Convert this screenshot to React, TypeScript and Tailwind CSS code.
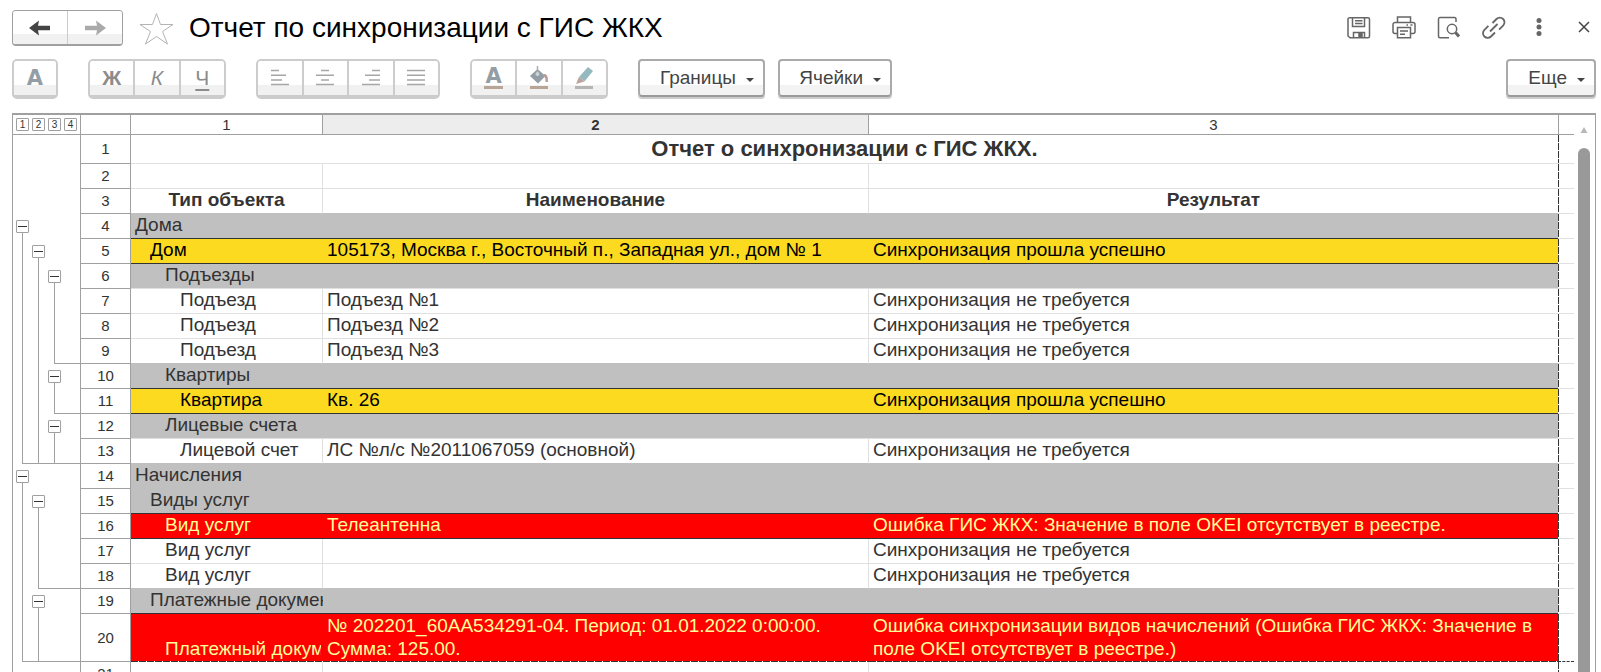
import type { ReactNode } from 'react';
import clsx from 'clsx';

type Kind = 'plain' | 'group' | 'success' | 'error';

interface Row {
    n: number;
    kind: Kind;
    level: number;
    // one char per outline lane: o = toggle, | = line, L = end, T = line over end, - = end continued
    lanes: string;
    type: string;
    name?: string;
    result?: string;
}

const NOT_REQUIRED = 'Синхронизация не требуется';
const SUCCESS = 'Синхронизация прошла успешно';

const rows: Row[] = [
    { n: 4, kind: 'group', level: 0, lanes: 'o   ', type: 'Дома' },
    { n: 5, kind: 'success', level: 1, lanes: '|o  ', type: 'Дом', name: '105173, Москва г., Восточный п., Западная ул., дом № 1', result: SUCCESS },
    { n: 6, kind: 'group', level: 2, lanes: '||o ', type: 'Подъезды' },
    { n: 7, kind: 'plain', level: 3, lanes: '||| ', type: 'Подъезд', name: 'Подъезд №1', result: NOT_REQUIRED },
    { n: 8, kind: 'plain', level: 3, lanes: '||| ', type: 'Подъезд', name: 'Подъезд №2', result: NOT_REQUIRED },
    { n: 9, kind: 'plain', level: 3, lanes: '||L-', type: 'Подъезд', name: 'Подъезд №3', result: NOT_REQUIRED },
    { n: 10, kind: 'group', level: 2, lanes: '||o ', type: 'Квартиры' },
    { n: 11, kind: 'success', level: 3, lanes: '||L-', type: 'Квартира', name: 'Кв. 26', result: SUCCESS },
    { n: 12, kind: 'group', level: 2, lanes: '||o ', type: 'Лицевые счета' },
    { n: 13, kind: 'plain', level: 3, lanes: 'LTT-', type: 'Лицевой счет', name: 'ЛС №л/с №2011067059 (основной)', result: NOT_REQUIRED },
    { n: 14, kind: 'group', level: 0, lanes: 'o   ', type: 'Начисления' },
    { n: 15, kind: 'group', level: 1, lanes: '|o  ', type: 'Виды услуг' },
    { n: 16, kind: 'error', level: 2, lanes: '||  ', type: 'Вид услуг', name: 'Телеантенна', result: 'Ошибка ГИС ЖКХ: Значение в поле OKEI отсутствует в реестре.' },
    { n: 17, kind: 'plain', level: 2, lanes: '||  ', type: 'Вид услуг', result: NOT_REQUIRED },
    { n: 18, kind: 'plain', level: 2, lanes: '|L--', type: 'Вид услуг', result: NOT_REQUIRED },
    { n: 19, kind: 'group', level: 1, lanes: '|o  ', type: 'Платежные документы' },
    {
        n: 20,
        kind: 'error',
        level: 2,
        lanes: 'LT--',
        type: 'Платежный документ',
        name: '№ 202201_60АА534291-04. Период: 01.01.2022 0:00:00. Сумма: 125.00.',
        result: 'Ошибка синхронизации видов начислений (Ошибка ГИС ЖКХ: Значение в поле OKEI отсутствует в реестре.)',
    },
];

const indents = ['pl-1', 'pl-[19px]', 'pl-[34px]', 'pl-[49px]'];

const kindStyles: Record<Kind, string> = {
    plain: 'text-[#333]',
    group: 'bg-[#c0c0c0] text-[#333]',
    success: 'bg-[#fbda20] text-black',
    error: 'bg-[#ff0000] text-[#ffff99]',
};

// The bottom line of a row takes its colour from the rows it separates
function bottomLine(kind: Kind, next?: Kind) {
    if (kind === 'success' || kind === 'error' || next === 'success' || next === 'error') return 'border-b border-b-[#333]';
    if (kind === 'group' && next === 'plain') return 'border-b border-b-[#e0e0e0]';
    if (kind === 'group' || next === 'group') return 'border-b border-b-[#c0c0c0]';
    return 'border-b border-b-[#e0e0e0]';
}

function Lane({ code }: { code: string }) {
    const vertical = code === '|' || code === 'L' || code === 'T';
    if (code === 'o') {
        return (
            <span className="flex w-4 flex-col pt-1.5 last:flex-1">
                <button aria-label="Свернуть группу" className="ml-0.5 flex size-[13px] shrink-0 items-center justify-center rounded-[1px] border border-[#a0a0a0] bg-white">
                    <span className="h-px w-[9px] bg-[#333]" />
                </button>
                <span className="ml-2 w-px flex-1 bg-[#a0a0a0]" />
            </span>
        );
    }
    return (
        <span className="flex w-4 last:flex-1">
            <span className={clsx('w-2', (code === 'T' || code === '-') && 'border-b border-[#a0a0a0]')} />
            <span className={clsx('flex-1 border-[#a0a0a0]', vertical && 'border-l', (code === 'L' || code === 'T' || code === '-') && 'border-b')} />
        </span>
    );
}

function Gutter({ lanes = '    ', className }: { lanes?: string; className: string }) {
    return (
        <td className="border-r border-[#a0a0a0] p-0 align-top">
            <div className={clsx('flex pl-px', className)}>
                {lanes.split('').map((code, i) => (
                    <Lane key={i} code={code} />
                ))}
            </div>
        </td>
    );
}

function RowNumber({ children }: { children: ReactNode }) {
    return (
        <th scope="row" className="border-r border-b border-[#a0a0a0] p-0 text-center align-middle text-[15px] leading-5 font-normal text-[#333]">
            {children}
        </th>
    );
}

function Tail({ dashed }: { dashed?: boolean }) {
    return (
        <td
            className={clsx(
                'border-b bg-[repeating-linear-gradient(to_bottom,#333_0_7px,#fff_7px_8px)] bg-[length:1px_100%] bg-no-repeat p-0',
                dashed ? 'border-dashed border-[#333]' : 'border-[#e0e0e0]',
            )}
        />
    );
}

function ToolGroup({ children }: { children: ReactNode }) {
    return <div className="flex h-10 divide-x-2 divide-[#ccc] overflow-hidden rounded-[5px] border-2 border-b-4 border-[#ccc]">{children}</div>;
}

function Tool({ label, children, className }: { label: string; children: ReactNode; className?: string }) {
    return (
        <button
            aria-label={label}
            title={label}
            className={clsx('flex flex-1 items-center justify-center bg-linear-to-b from-white from-70% to-[#f1f1f1] to-70% text-[21px] leading-6 text-[#8c8c8c]', className)}
        >
            {children}
        </button>
    );
}

function MenuButton({ children, className }: { children: ReactNode; className: string }) {
    return (
        <button
            className={clsx(
                'flex h-[38px] items-center justify-end gap-2.5 rounded-[4px] border-2 border-[#aaa] border-b-[#999] bg-linear-to-b from-white from-70% to-[#f3f3f3] to-70% pr-[9px] text-[19px] leading-6 text-[#444] shadow-[0_2px_0_#ccc]',
                className,
            )}
        >
            {children}
            <svg width="8" height="4" viewBox="0 0 8 4" className="mt-1" fill="#444">
                <path d="M0 0h8L4 4z" />
            </svg>
        </button>
    );
}

function AlignIcon({ lines }: { lines: [number, number][] }) {
    return (
        <svg width="20" height="18" viewBox="0 0 20 18" stroke="#a6a6a6" strokeWidth="1.5">
            {lines.map(([from, to], i) => (
                <path key={i} d={`M${from} ${1.5 + i * 4.7}H${to}`} />
            ))}
        </svg>
    );
}

function HeaderButton({ label, children }: { label: string; children: ReactNode }) {
    return (
        <button aria-label={label} title={label} className="size-6">
            <svg width="24" height="24" viewBox="0 0 24 24" fill="none" stroke="#666" strokeWidth="1.5">
                {children}
            </svg>
        </button>
    );
}

export default function App() {
    return (
        <div className="flex h-screen flex-col overflow-hidden bg-white pt-2.5 pr-[5px] pl-3 font-['Liberation_Sans',Arial,sans-serif]">
            <header className="flex h-9 shrink-0 items-center">
                <div className="flex h-9 w-[111px] divide-x divide-[#ccc] overflow-hidden rounded-[4px] border border-b-2 border-[#a0a0a0]">
                    <Tool label="Назад">
                        <svg width="22" height="16" viewBox="0 0 22 16" fill="#444">
                            <path d="M0 8 10 0.500 9 5.800H21v4.400H9L10 15.500z" />
                        </svg>
                    </Tool>
                    <Tool label="Вперед">
                        <svg width="22" height="16" viewBox="0 0 22 16" fill="#aaa">
                            <path d="M22 8 12 0.500l1 5.300H1v4.400h12L12 15.500z" />
                        </svg>
                    </Tool>
                </div>
                <button aria-label="Добавить в избранное" className="ml-4">
                    <svg width="35" height="33" viewBox="0 0 35 33" fill="none" stroke="#b4b4b4">
                        <path d="m17.500 1.500 4 11H34L23.500 19.500l5 12.500-11-7.500-11 7.500 5-12.500L1 12.500h12.500z" />
                    </svg>
                </button>
                <h1 className="ml-[15px] flex-1 text-[28px] leading-9 whitespace-nowrap text-black">Отчет по синхронизации с ГИС ЖКХ</h1>
                <div className="flex gap-[21px]">
                    <HeaderButton label="Сохранить">
                        <path d="M3 1.800h18a1.500 1.500 0 0 1 1.500 1.500v17a1.500 1.500 0 0 1-1.500 1.500H3L1 20V3.300A1.500 1.500 0 0 1 3 1.800zM5.500 2v8.500h12V2M8 4.800h7.500M8 7.500h7.500M6.500 21.500v-5h11v5" />
                        <path d="M12 17.500h3v3.500h-3z" fill="#666" />
                    </HeaderButton>
                    <HeaderButton label="Печать">
                        <path d="M5.500 6.500V1h13v5.500M5.500 17.500H3a2 2 0 0 1-2-2v-7a2 2 0 0 1 2-2h18a2 2 0 0 1 2 2v7a2 2 0 0 1-2 2h-2.500M5.500 11.500h13v10.300h-13zM8 15h8M8 18.200h5M14.500 9h1.500M18.500 9h2" />
                    </HeaderButton>
                    <HeaderButton label="Просмотр">
                        <path d="M12 21.800H3A1.500 1.500 0 0 1 1.500 20.300V3A1.500 1.500 0 0 1 3 1.500h14.500A1.500 1.500 0 0 1 19 3v3" />
                        <circle cx="15" cy="13" r="4.700" />
                        <path d="m18.500 16.500 3.500 4" strokeWidth="3" />
                    </HeaderButton>
                    <HeaderButton label="Ссылка">
                        <path d="m8 15.500 7.500-7.500M10.500 7l4-4a4.600 4.600 0 0 1 6.600 0 4.600 4.600 0 0 1 0 6.600l-4 4M13 16.500l-4 4a4.600 4.600 0 0 1-6.600 0 4.600 4.600 0 0 1 0-6.600l4-4" strokeWidth="1.800" />
                    </HeaderButton>
                    <HeaderButton label="Меню">
                        <g fill="#666" stroke="none">
                            <circle cx="12" cy="4.500" r="2.500" />
                            <circle cx="12" cy="11" r="2.500" />
                            <circle cx="12" cy="17.500" r="2.500" />
                        </g>
                    </HeaderButton>
                    <HeaderButton label="Закрыть">
                        <path d="m7 6 10 10m0-10-10 10" stroke="#444" />
                    </HeaderButton>
                </div>
            </header>

            {/* Formatting toolbar */}
            <div className="mt-[13px] flex shrink-0 items-start">
                <div className="flex gap-[30px]">
                    <div className="w-[46px]">
                        <ToolGroup>
                            <Tool label="Шрифт" className="font-['DejaVu_Sans',sans-serif] font-bold text-[#929da5]">A</Tool>
                        </ToolGroup>
                    </div>
                    <div className="w-[138px]">
                        <ToolGroup>
                            <Tool label="Жирный" className="font-bold">Ж</Tool>
                            <Tool label="Курсив" className="italic">К</Tool>
                            <Tool label="Подчеркнутый" className="underline underline-offset-4">Ч</Tool>
                        </ToolGroup>
                    </div>
                    <div className="w-[184px]">
                        <ToolGroup>
                            <Tool label="По левому краю">
                                <AlignIcon lines={[[1, 9], [1, 16], [1, 12], [1, 19]]} />
                            </Tool>
                            <Tool label="По центру">
                                <AlignIcon lines={[[6, 14], [1, 19], [6, 14], [1, 19]]} />
                            </Tool>
                            <Tool label="По правому краю">
                                <AlignIcon lines={[[11, 19], [4, 19], [8, 19], [1, 19]]} />
                            </Tool>
                            <Tool label="По ширине">
                                <AlignIcon lines={[[1, 19], [1, 19], [1, 19], [1, 19]]} />
                            </Tool>
                        </ToolGroup>
                    </div>
                    <div className="w-[138px]">
                        <ToolGroup>
                            <Tool label="Цвет текста">
                                <span className="flex flex-col items-center gap-px font-['DejaVu_Sans',sans-serif] leading-[18px] font-bold text-[#929da5]">
                                    A
                                    <span className="h-[3px] w-[19px] bg-[#b8a596]" />
                                </span>
                            </Tool>
                            <Tool label="Цвет фона">
                                <svg width="20" height="24" viewBox="0 0 20 24">
                                    <path d="M1 10 8.500 3l8 7L9 17.500z" fill="#929da5" />
                                    <path d="M15 8c3 0 4 2 4 8h-2.500c0-4 0-5-3-6z" fill="#b79d98" />
                                    <path d="M8.500 0v7" stroke="#a8b0b5" strokeWidth="1.500" />
                                    <circle cx="8.500" cy="8" r="2" fill="#ccd2d6" />
                                    <path d="M1 20h18v3H1z" fill="#b8a596" />
                                </svg>
                            </Tool>
                            <Tool label="Цвет рамки">
                                <svg width="20" height="24" viewBox="0 0 20 24">
                                    <path d="m5 11 9-10 5 4-8.500 10.500z" fill="#96b9bf" />
                                    <path d="m5 11 5.500 4.500L2 18z" fill="#bda39b" />
                                    <path d="M1 20h18v3H1z" fill="#b5b5b5" />
                                </svg>
                            </Tool>
                        </ToolGroup>
                    </div>
                    <div className="flex gap-[13px]">
                        <MenuButton className="w-[127px]">Границы</MenuButton>
                        <MenuButton className="w-[114px]">Ячейки</MenuButton>
                    </div>
                </div>
                <MenuButton className="ml-auto w-[90px]">Еще</MenuButton>
            </div>

            {/* Spreadsheet */}
            <main className="mt-3.5 flex min-h-0 flex-1 border-x border-t-2 border-[#a0a0a0]">
                <div className="min-w-0 flex-1 overflow-hidden">
                    <table className="w-full table-fixed border-separate border-spacing-0 text-[19px] leading-[22px]">
                        <colgroup>
                            <col className="w-[68px]" />
                            <col className="w-[50px]" />
                            <col className="w-48" />
                            <col className="w-[546px]" />
                            <col />
                            <col className="w-4" />
                        </colgroup>
                        <thead>
                            <tr className="h-5 text-[15px] leading-[19px] text-[#333]">
                                <td className="border-r border-b border-[#a0a0a0] p-0 pl-[3px]">
                                    <div className="flex gap-[3px]">
                                        {[1, 2, 3, 4].map((level) => (
                                            <button key={level} className="flex size-[13px] items-center justify-center rounded-[1px] border border-[#a0a0a0] text-[10px] leading-3">
                                                {level}
                                            </button>
                                        ))}
                                    </div>
                                </td>
                                <td className="border-r border-b border-[#a0a0a0] p-0" />
                                <th scope="col" className="border-r border-b border-[#a0a0a0] p-0 font-normal">1</th>
                                <th scope="col" className="border-r border-b border-[#a0a0a0] bg-[#ededed] p-0 font-bold">2</th>
                                <th scope="col" className="border-b border-[#a0a0a0] p-0 font-normal">3</th>
                                <td className="border-b border-l border-[#a0a0a0] p-0" />
                            </tr>
                        </thead>
                        <tbody>
                            <tr className="h-[29px] text-[#333]">
                                <Gutter className="h-[29px]" />
                                <RowNumber>1</RowNumber>
                                <td colSpan={3} className="border-b border-[#e0e0e0] p-0 text-center text-[22px] leading-7 font-bold">
                                    Отчет о синхронизации с ГИС ЖКХ.
                                </td>
                                <Tail />
                            </tr>
                            <tr className="h-[25px]">
                                <Gutter className="h-[25px]" />
                                <RowNumber>2</RowNumber>
                                <td className="border-r border-b border-[#e0e0e0] p-0" />
                                <td className="border-r border-b border-[#e0e0e0] p-0" />
                                <td className="border-b border-[#e0e0e0] p-0" />
                                <Tail />
                            </tr>
                            <tr className="h-[25px] text-center font-bold text-[#333]">
                                <Gutter className="h-[25px]" />
                                <RowNumber>3</RowNumber>
                                <td className="border-r border-b border-r-[#e0e0e0] border-b-[#c0c0c0] p-0 pb-0.5">Тип объекта</td>
                                <td className="border-r border-b border-r-[#e0e0e0] border-b-[#c0c0c0] p-0 pb-0.5">Наименование</td>
                                <td className="border-b border-b-[#c0c0c0] p-0 pb-0.5">Результат</td>
                                <Tail />
                            </tr>
                            {rows.map((row, i) => {
                                const tall = row.n === 20;
                                const last = i === rows.length - 1;
                                const cell = clsx(
                                    'overflow-hidden p-0 pb-0.5',
                                    kindStyles[row.kind],
                                    tall ? 'align-bottom leading-[23px]' : 'align-middle whitespace-nowrap',
                                    last
                                        ? 'bg-[repeating-linear-gradient(to_right,#333_0_7px,#fff_7px_8px)] bg-[length:100%_1px] bg-bottom bg-no-repeat bg-origin-border'
                                        : bottomLine(row.kind, rows[i + 1]?.kind),
                                );
                                const divider = row.kind === 'plain' && 'border-r border-r-[#e0e0e0]';
                                return (
                                    <tr key={row.n} className={tall ? 'h-12' : 'h-[25px]'}>
                                        <Gutter lanes={row.lanes} className={tall ? 'h-12' : 'h-[25px]'} />
                                        <RowNumber>{row.n}</RowNumber>
                                        <td className={clsx(cell, divider, last && 'border-r-2 border-r-transparent', indents[row.level], 'whitespace-nowrap')}>{row.type}</td>
                                        <td className={clsx(cell, divider, 'pl-1')}>{row.name}</td>
                                        <td className={clsx(cell, 'pl-1')}>{row.result}</td>
                                        <Tail dashed={last} />
                                    </tr>
                                );
                            })}
                            <tr className="h-[25px]">
                                <Gutter className="h-[25px]" />
                                <RowNumber>21</RowNumber>
                                <td className="border-r border-b border-[#e0e0e0] p-0" />
                                <td className="border-r border-b border-[#e0e0e0] p-0" />
                                <td className="border-b border-[#e0e0e0] p-0" />
                                <Tail />
                            </tr>
                        </tbody>
                    </table>
                </div>
                <div className="flex w-[21px] flex-col pt-3 pl-1">
                    <svg width="12" height="6" viewBox="0 0 12 6" fill="#b8b8b8">
                        <path d="M6 0 9.500 6h-7z" />
                    </svg>
                    <div className="mt-[15px] w-3 flex-1 rounded-t-full bg-[#999]" />
                </div>
            </main>
        </div>
    );
}
